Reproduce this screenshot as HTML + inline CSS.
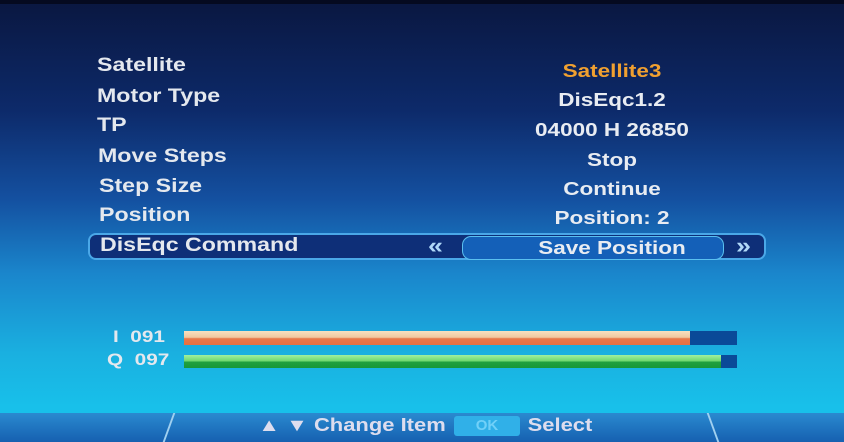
<!DOCTYPE html>
<html><head><meta charset="utf-8"><style>
body{margin:0;width:844px;height:442px;overflow:hidden;font-family:"Liberation Sans",sans-serif;font-weight:bold;}
#bg{position:absolute;left:0;top:0;width:844px;height:442px;background:linear-gradient(180deg,#0a1740 0%,#0d2a6a 25%,#1450a0 45%,#1a86cc 62%,#1ab0e0 80%,#18c0ea 92%);}
.t{position:absolute;color:#e4e8ee;font-size:19px;white-space:nowrap;transform:scaleX(1.22);transform-origin:0 0;}
.v{position:absolute;color:#e8ecf2;font-size:18px;text-align:center;width:300px;left:462px;white-space:nowrap;transform:scaleX(1.25);}
.c{position:absolute;color:#e4e8ee;white-space:nowrap;transform:scaleX(1.22);text-align:center;}
</style></head><body><div id="bg"></div>
<div style="position:absolute;left:0;top:0;width:844px;height:4px;background:#050a20"></div>
<div class="t" style="left:97px;top:55px">Satellite</div>
<div class="t" style="left:97px;top:86px">Motor Type</div>
<div class="t" style="left:97px;top:115px">TP</div>
<div class="t" style="left:98px;top:146px">Move Steps</div>
<div class="t" style="left:99px;top:176px">Step Size</div>
<div class="t" style="left:99px;top:205px">Position</div>
<div class="v" style="top:61px;color:#f0a030">Satellite3</div>
<div class="v" style="top:90px">DisEqc1.2</div>
<div class="v" style="top:120px">04000 H 26850</div>
<div class="v" style="top:150px">Stop</div>
<div class="v" style="top:179px">Continue</div>
<div class="v" style="top:208px">Position: 2</div>
<div style="position:absolute;left:88px;top:233px;width:678px;height:27px;border-radius:8px;background:#0e2f78;border:2px solid #4aa8e8;box-sizing:border-box"></div>
<div class="t" style="left:100px;top:235px">DisEqc Command</div>
<div style="position:absolute;left:462px;top:236px;width:262px;height:24px;border-radius:9px;background:#1460b8;border:1px solid #5ac0f0;box-sizing:border-box"></div>
<div class="v" style="top:238px">Save Position</div>
<div class="t" style="left:428px;top:233px;color:#b0d8f8;font-size:22px">«</div>
<div class="t" style="left:736px;top:233px;color:#b0d8f8;font-size:22px">»</div>
<div class="t" style="left:113px;top:327px;font-size:17px">I&nbsp;&nbsp;091</div>
<div class="t" style="left:107px;top:350px;font-size:17px">Q&nbsp;&nbsp;097</div>
<div style="position:absolute;left:184px;top:331px;width:553px;height:14px;background:#0a4a98"></div>
<div style="position:absolute;left:184px;top:331px;width:506px;height:14px;background:linear-gradient(#f8e0c0 0%,#f0c8a0 45%,#e8784a 55%,#e87040 100%)"></div>
<div style="position:absolute;left:184px;top:355px;width:553px;height:13px;background:#0a4a98"></div>
<div style="position:absolute;left:184px;top:355px;width:537px;height:13px;background:linear-gradient(#a0f0a0 0%,#70d870 45%,#20a040 55%,#189838 100%)"></div>
<div style="position:absolute;left:0;top:413px;width:844px;height:29px;background:linear-gradient(#2a8ad0,#1660b0)"></div>
<div style="position:absolute;left:168px;top:413px;width:2px;height:29px;background:#a0d0f0;transform:skewX(-20deg)"></div>
<div style="position:absolute;left:712px;top:413px;width:2px;height:29px;background:#a0d0f0;transform:skewX(20deg)"></div>
<div class="c" style="left:256px;width:192px;top:415px;font-size:18px;color:#dde">▲ ▼ Change Item</div>
<div style="position:absolute;left:454px;top:416px;width:66px;height:20px;background:#30b0e8;border-radius:3px;color:#70d0f8;font-size:15px;text-align:center;line-height:20px">OK</div>
<div class="c" style="left:526px;width:68px;top:415px;font-size:18px;color:#dde">Select</div>
</body></html>
